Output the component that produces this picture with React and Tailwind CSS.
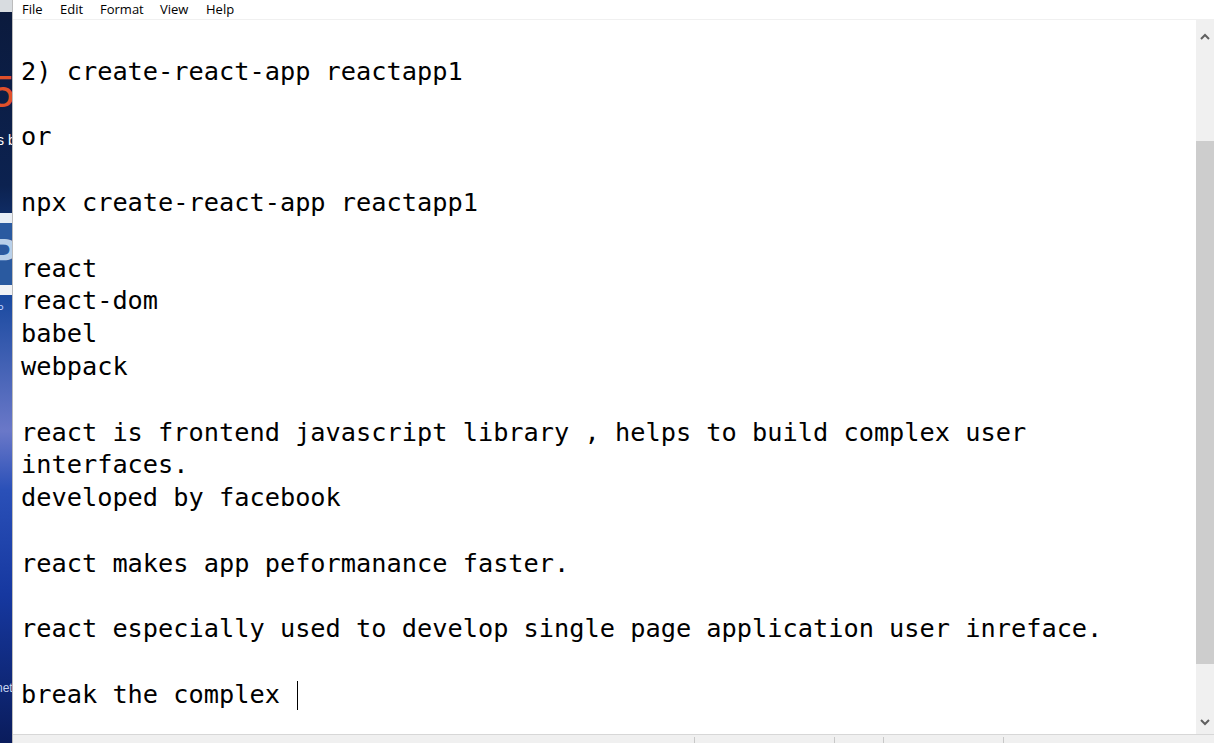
import React from "react";

const lines = [
  "",
  "2) create-react-app reactapp1",
  "",
  "or",
  "",
  "npx create-react-app reactapp1",
  "",
  "react",
  "react-dom",
  "babel",
  "webpack",
  "",
  "react is frontend javascript library , helps to build complex user",
  "interfaces.",
  "developed by facebook",
  "",
  "react makes app peformanance faster.",
  "",
  "react especially used to develop single page application user inreface.",
  "",
];

function Chevron({ up }) {
  return (
    <svg width="10" height="7" viewBox="0 0 10 7">
      <path
        d={up ? "M1 6 L5 2 L9 6" : "M1 1 L5 5 L9 1"}
        fill="none"
        stroke="#606060"
        strokeWidth="2"
      />
    </svg>
  );
}

export default function App() {
  return (
    <div className="w-[1214px] h-[743px] flex overflow-hidden bg-white">
      {/* desktop strip */}
      <div className="relative w-[13px] h-full overflow-hidden bg-[linear-gradient(180deg,#0b1a3c_0%,#0c2250_25%,#1a4aa0_40%,#6a78c8_58%,#2a50b8_66%,#1638a0_80%,#0a1c5c_100%)] border-r border-[#bcbcbc] shrink-0 whitespace-nowrap">
        <div className="absolute top-0 left-0 w-full h-[12px] bg-[#d8dce0]" />
        <div className="absolute top-[70px] left-[-10px] text-[44px] leading-none text-[#e0502a] font-['Liberation_Sans',sans-serif]">5</div>
        <div className="absolute top-[133px] left-[-3px] text-[14px] leading-none text-white font-['Liberation_Sans',sans-serif]">s b</div>
        <div className="absolute top-[213px] left-0 w-full h-[10px] bg-[#e8eef5]" />
        <div className="absolute top-[223px] left-0 w-full h-[62px] bg-[#2a5aa0]" />
        <div className="absolute top-[232px] left-[-14px] text-[48px] leading-none font-bold text-[#b8d0ea] font-['Liberation_Sans',sans-serif]">P</div>
        <div className="absolute top-[285px] left-0 w-full h-[10px] bg-[#f0f2f6]" />
        <div className="absolute top-[305px] left-[-3px] text-[10px] leading-none text-[#c0d0ff] font-['Liberation_Sans',sans-serif]">P</div>
        <div className="absolute top-[682px] left-[-4px] text-[12px] leading-none text-[#c8d4f0] font-['Liberation_Sans',sans-serif]">net</div>
      </div>

      {/* notepad window */}
      <div className="flex-1 flex flex-col min-w-0">
        {/* menu bar */}
        <div className="h-[20px] flex items-center border-b border-[#f0f0f0] bg-white text-[13px] text-black font-['Open_Sans','Noto_Sans',sans-serif] shrink-0">
          <span className="ml-[9px] w-[38px]">File</span>
          <span className="w-[40px]">Edit</span>
          <span className="w-[60px]">Format</span>
          <span className="w-[46px]">View</span>
          <span>Help</span>
        </div>

        {/* editor + scrollbar */}
        <div className="flex-1 flex min-h-0">
          <div className="flex-1 pl-[8px] pt-[3px] font-['DejaVu_Sans_Mono',monospace] text-[25.3px] leading-[32.8px] text-black whitespace-pre overflow-hidden">
            {lines.map((l, i) => (
              <div key={i} className="h-[32.8px]">{l}</div>
            ))}
            <div className="h-[32.8px] flex items-center">
              <span>break the complex </span>
              <span className="w-px h-[29px] bg-black ml-[2px]" />
            </div>
          </div>
          <div className="w-[18px] bg-[#f0f0f0] flex flex-col items-center shrink-0">
            <div className="h-[23px] w-full flex items-end justify-center pb-[3px]">
              <Chevron up />
            </div>
            <div className="h-[98px]" />
            <div className="w-full h-[523px] bg-[#cdcdcd]" />
            <div className="flex-1" />
            <div className="h-[17px] w-full flex items-start justify-center pt-[2px]">
              <Chevron />
            </div>
          </div>
        </div>

        {/* status bar */}
        <div className="h-[9px] bg-[#f0f0f0] border-t border-[#d7d7d7] flex shrink-0">
          <div className="w-[681px]" />
          <div className="w-[140px] border-l border-[#c8c8c8] mt-[2px]" />
          <div className="w-[49px] border-l border-[#c8c8c8] mt-[2px]" />
          <div className="w-[120px] border-l border-[#c8c8c8] mt-[2px]" />
          <div className="flex-1 border-l border-[#c8c8c8] mt-[2px]" />
        </div>
      </div>
    </div>
  );
}
